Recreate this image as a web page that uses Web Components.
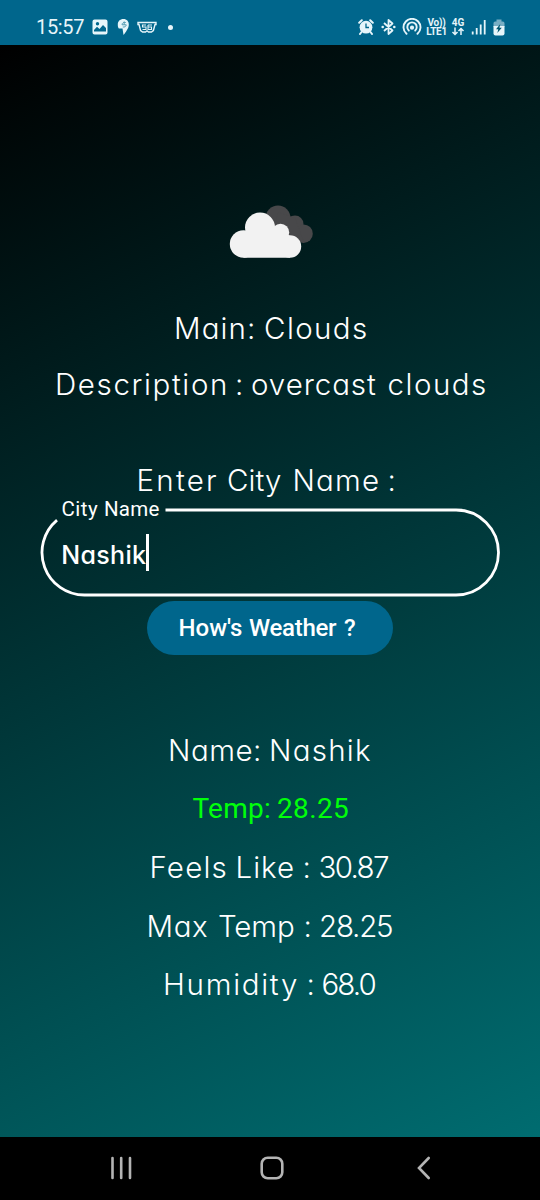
<!DOCTYPE html>
<html lang="en">
<head>
<meta charset="utf-8">
<title>Weather</title>
<style>
  html, body { margin: 0; height: 100%; background: #000; overflow: hidden; }
</style>
</head>
<body>
<weather-app></weather-app>
<script>
const define = (name, html, connect) => {
  const template = document.createElement('template');
  template.innerHTML = html;
  customElements.define(name, class extends HTMLElement {
    constructor() {
      super();
      this.attachShadow({ mode: 'open' }).appendChild(template.content.cloneNode(true));
    }
    connectedCallback() { if (connect) connect(this); }
  });
};

const pen = document.createElement('canvas').getContext('2d');

/* One line of text. "words" lists the start-end extent of each word;
   tracking and word gaps are adjusted so the words fill those extents. */
define('text-line', `
  <style>
    :host { display: block; width: 540px; height: 40px;
      font: 300 29.5px/40px Inter, sans-serif; font-feature-settings: "cv11", "ss03", "calt" 0; color: #fff; }
    :host([face="roboto"]) { font-family: Roboto, sans-serif; font-weight: 400; font-size: 28px; }
    div { white-space: pre; }
  </style>
  <div></div>`, el => {
  const line = el.shadowRoot.querySelector('div');
  const words = el.textContent.split(' ');
  const extents = el.getAttribute('words').split(' ').map(e => e.split('-').map(Number));
  const style = getComputedStyle(el);
  pen.font = `${style.fontWeight} ${style.fontSize} ${style.fontFamily}`;
  const spaceWidth = pen.measureText(' ').width;
  let cursor = 0, space = null;
  line.textContent = '';
  words.forEach((word, i) => {
    const [start, end] = extents[i];
    const m = pen.measureText(word);
    const left = -m.actualBoundingBoxLeft;
    const span = document.createElement('span');
    span.textContent = word;
    line.append(span);
    const advance = span.getBoundingClientRect().width;
    const ink = advance - left - (m.width - m.actualBoundingBoxRight);
    const gap = word.length > 1 ? (end - start - ink) / (word.length - 1) : 0;
    span.style.letterSpacing = gap + 'px';
    if (space) space.style.letterSpacing = (start - left - cursor - spaceWidth) + 'px';
    else line.style.textIndent = (start - left) + 'px';
    cursor = start - left + advance + gap * word.length;
    if (i < words.length - 1) {
      space = document.createElement('span');
      space.textContent = ' ';
      line.append(space);
    }
  });
});

define('status-bar', `
  <style>
    :host { display: flex; justify-content: space-between; height: 45px; background: #00668c; color: #e6f5fa;
      box-sizing: border-box; padding: 9px 35px 0 36px; font-family: Roboto, sans-serif; }
    .group { display: flex; align-items: center; height: 36px; }
    .time { font-size: 20px; line-height: 36px; width: 48px; margin-right: 8px; letter-spacing: -.35px; }
    svg { display: block; flex: none; }
    .stack { font-size: 10px; line-height: 9px; font-weight: 700; text-align: center; white-space: nowrap; }
  </style>
  <div class="group">
    <div class="time">15:57</div>
    <svg width="16" height="16" viewBox="0 0 16 16" style="margin-right:9px"><path fill="currentColor" fill-rule="evenodd" d="M2.500.5h11a2 2 0 0 1 2 2v11a2 2 0 0 1-2 2h-11a2 2 0 0 1-2-2v-11a2 2 0 0 1 2-2zM2 12.500h12V9l-3-3-3.500 4-2.500-2.200L2 11zM5.500 3a1.700 1.700 0 1 0 0 3.400A1.700 1.700 0 0 0 5.500 3z"/></svg>
    <svg width="13" height="18" viewBox="0 0 13 18" style="margin-right:7px"><path fill="currentColor" d="M6.500 1C2.800 1 .8 3.500.8 6.300c0 1.700 0 3 1 4.200h3.700L6.500 17c2.200-2.900 5.300-6.600 5.300-10.500C11.800 3.400 9.800 1 6.500 1z"/><path d="M7.200 3.500v3.300M8.800 4.500C6.500 4 5 5 5 6.800h4.200c0 1.800-1.500 2.400-3.400 2.200" fill="none" stroke="#4795ae" stroke-width=".9"/></svg>
    <svg width="20" height="12" viewBox="0 0 20 12" style="margin-right:11px"><path d="M1 1.500h18v2h-1l-1.600 6-2 1.500h-2.900L10 9.800 8.500 11H5.600l-2-1.500L2 3.500H1z" fill="none" stroke="currentColor" stroke-width="1.400"/><path d="M9 4H5.500v2H9v2.500H5.500M11 4v4.500h3.500V6H11m0-2h4" fill="none" stroke="currentColor" stroke-width="1.100"/></svg>
    <svg width="5" height="5"><circle cx="2.500" cy="2.500" r="2.500" fill="currentColor"/></svg>
  </div>
  <div class="group">
    <svg width="16" height="16" viewBox="0 0 16 16" style="margin-right:7px"><circle cx="8" cy="8.200" r="6.400" fill="currentColor"/><path d="M1.200 3.800l2.600-2.600M12.200 1.200l2.600 2.600M3.500 13L2 15M12.500 13l1.500 2" stroke="currentColor" stroke-width="2" stroke-linecap="round"/><path d="M8 4.500V8.500h3" stroke="#00668c" stroke-width="1.300" fill="none"/></svg>
    <svg width="15" height="18" viewBox="0 0 15 18" style="margin-right:6px"><path d="M3 5l8.500 7.500L7.500 16V2l4 3.500L3 13" fill="none" stroke="currentColor" stroke-width="1.800" stroke-linejoin="round"/><circle cx="1.700" cy="9" r="1.300" fill="currentColor"/><circle cx="13.300" cy="9" r="1.300" fill="currentColor"/></svg>
    <svg width="20" height="18" viewBox="0 0 20 18" style="margin-right:4px"><g fill="none" stroke="currentColor" stroke-width="1.900" stroke-linecap="round"><path d="M4.500 15.800a8.500 8.500 0 1 1 11 0"/><path d="M6.800 12.500a4.700 4.700 0 1 1 6.400 0"/></g><circle cx="10" cy="9.700" r="2.100" fill="currentColor"/></svg>
    <div class="stack" style="width:21px;margin-right:4px;letter-spacing:-.3px">Vo))<br>LTE1</div>
    <div class="stack" style="width:14px;margin-right:6px">4G<svg width="14" height="9" viewBox="0 0 14 9"><path d="M4 .5V7M1.500 5L4 7.500 6.500 5M10 8V1.500M7.500 4L10 1.500 12.500 4" fill="none" stroke="currentColor" stroke-width="1.500"/></svg></div>
    <svg width="15" height="16" viewBox="0 0 15 16" style="margin-right:7px"><path d="M1.700 15.500V12.500M5.700 15.500V9M9.700 15.500V5.500M13.700 15.500V1" stroke="currentColor" stroke-width="1.800"/></svg>
    <svg width="12" height="17" viewBox="0 0 12 17"><path fill="#78aec4" d="M3.500.5h5v2h1.300q1.700 0 1.700 1.700V8H.5V4.200q0-1.700 1.700-1.700h1.300z"/><path fill="currentColor" d="M.5 7h11v7.500q0 2-2 2h-7q-2 0-2-2z"/><path fill="#00566f" d="M7.300 5L3 10.300h2.300L4.300 14l4.500-5.300H6.400z"/></svg>
  </div>`);

define('cloud-icon', `
  <style>:host { display: block; width: 86px; height: 56px; } svg { display: block; }</style>
  <svg width="86" height="56" viewBox="228 204 86 56">
    <g fill="#48484a"><circle cx="278" cy="218" r="12.500"/><circle cx="295" cy="224" r="8.500"/><circle cx="303.500" cy="233.700" r="9.300"/><path d="M278 212l17 6 9 24.500-12-2-18-10z"/></g>
    <g fill="#f2f2f2"><circle cx="243.500" cy="244" r="13.700"/><circle cx="260" cy="227.500" r="15"/><circle cx="280.500" cy="232.500" r="8.700"/><circle cx="290" cy="246.500" r="11.200"/><path d="M243.500 257.700H290V236l-10-8h-22l-14 8z"/></g>
  </svg>`);

define('city-field', `
  <style>
    :host { display: block; position: relative; width: 460px; height: 89px; color: #fff; }
    svg { display: block; }
    .label { position: absolute; left: 0; top: -11px; }
    .value { position: absolute; left: 0; top: 27px; }
    text-line { width: 200px; }
    .label text-line { font-size: 20.500px; height: 25px; line-height: 25px; }
    .value text-line { font-size: 25px; font-weight: 500; }
    .caret { position: absolute; left: 106px; top: -1px; width: 2.500px; height: 37px; background: #fff; }
  </style>
  <svg width="460" height="89" viewBox="40 508 460 89"><path d="M165.500 510H456a42.500 42.500 0 0 1 0 85H84.500A42.500 42.500 0 0 1 57 520.100" fill="none" stroke="#fff" stroke-width="2.800"/></svg>
  <div class="label"><text-line face="roboto" words="22.500-58 65-119.500">City Name</text-line></div>
  <div class="value"><text-line words="23.300-106">Nashik</text-line><i class="caret"></i></div>`);

define('pill-button', `
  <style>
    :host { display: block; }
    button { display: block; width: 246px; height: 54px; padding: 0; border: 0; border-radius: 27px;
      background: #00668c; box-sizing: border-box; text-align: left; }
    ::slotted(text-line) { width: 246px !important; font-weight: 500 !important; font-size: 24px !important; }
  </style>
  <button type="button"><slot></slot></button>`);

define('nav-bar', `
  <style>
    :host { display: grid; grid-template-columns: 260px 157px 1fr; align-items: center; height: 63px; background: #000;
      box-sizing: border-box; padding-bottom: 2px; }
    svg { display: block; }
    svg:first-of-type { margin-left: 110px; }
    path, rect { fill: none; stroke: #b4b4b4; stroke-width: 2.600; stroke-linecap: round; }
  </style>
  <svg width="22" height="24" viewBox="0 0 22 24"><path d="M2.500 2v20M11.200 2v20M20 2v20"/></svg>
  <svg width="24" height="24" viewBox="0 0 24 24"><rect x="1.700" y="1.700" width="20.600" height="20.600" rx="6"/></svg>
  <svg width="15" height="24" viewBox="0 0 15 24"><path d="M11.700 2L2 12l9.700 10"/></svg>`);

define('weather-app', `
  <style>
    :host { display: flex; flex-direction: column; width: 540px; height: 1200px; }
    main { flex: 1; display: flex; flex-direction: column; align-items: center; box-sizing: border-box; padding-top: 159px;
      background: linear-gradient(153.700deg, #000, #006c70); }
    cloud-icon { margin: 0 0 48px 2px; }
    .desc { margin-top: 16px; }
    .ask { margin: 56px 0 8px; }
    pill-button { margin: 4px 0 75px; }
    .results { display: grid; gap: 18.600px; }
    .temp { color: #00ff0a; }
  </style>
  <status-bar></status-bar>
  <main>
    <cloud-icon></cloud-icon>
    <text-line words="176-253 265-366">Main: Clouds</text-line>
    <text-line class="desc" words="57-225 237-241 252-376 388.500-485">Description : overcast clouds</text-line>
    <text-line class="ask" words="138.500-216 228-281 294.500-378 389.500-393">Enter City Name :</text-line>
    <city-field></city-field>
    <pill-button><text-line face="roboto" words="32.500-95 102-190 197-207.500">How's Weather ?</text-line></pill-button>
    <div class="results">
      <text-line words="170-259 271-370">Name: Nashik</text-line>
      <text-line class="temp" face="roboto" words="192.500-269 278-348">Temp: 28.25</text-line>
      <text-line words="151.500-225.500 237.500-293 304.500-308 319.500-388">Feels Like : 30.87</text-line>
      <text-line words="148.500-207 219-294 305.500-309 321-392">Max Temp : 28.25</text-line>
      <text-line words="165-297 308.500-312 322.500-375.500">Humidity : 68.0</text-line>
    </div>
  </main>
  <nav-bar></nav-bar>`);
</script>
</body>
</html>
